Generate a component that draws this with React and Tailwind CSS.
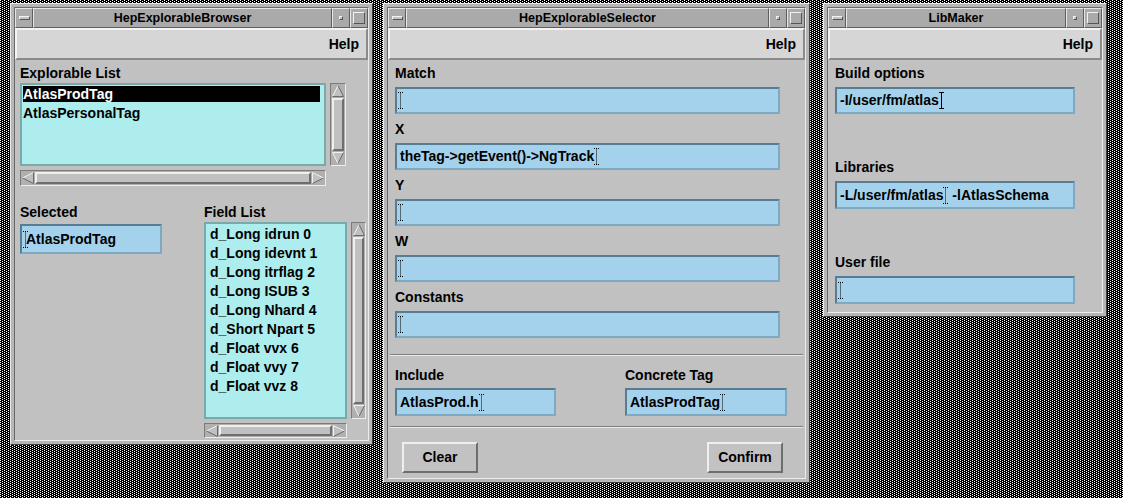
import React from "react";

const raised =
    "border-2 border-t-[#efefef] border-l-[#efefef] border-b-[#6e6e6e] border-r-[#6e6e6e]";

function Caret({ dotted }) {
    return (
        <svg width="5" height="17" viewBox="0 0 5 17" className="shrink-0">
            <path
                d="M0 0.5H5M2.5 0.5V16.5M0 16.5H5"
                stroke="#000"
                strokeWidth="1"
                strokeDasharray={dotted ? "1 1" : undefined}
                fill="none"
            />
        </svg>
    );
}

function Arrow({ dir }) {
    const shapes = {
        up: { poly: "6,0.5 0.5,11.5 11.5,11.5", light: "M0.5 11.5L6 0.5", dark: "M6 0.5L11.5 11.5L0.5 11.5" },
        down: { poly: "0.5,0.5 11.5,0.5 6,11.5", light: "M6 11.5L0.5 0.5L11.5 0.5", dark: "M11.5 0.5L6 11.5" },
        left: { poly: "0.5,6 11.5,0.5 11.5,11.5", light: "M0.5 6L11.5 0.5", dark: "M11.5 0.5L11.5 11.5L0.5 6" },
        right: { poly: "0.5,0.5 11.5,6 0.5,11.5", light: "M0.5 11.5L0.5 0.5L11.5 6", dark: "M11.5 6L0.5 11.5" },
    };
    const s = shapes[dir];
    return (
        <svg width="12" height="12" viewBox="0 0 12 12" className="shrink-0">
            <polygon points={s.poly} fill="#c0c0c0" />
            <path d={s.light} stroke="#f0f0f0" fill="none" />
            <path d={s.dark} stroke="#6a6a6a" fill="none" />
        </svg>
    );
}

function ScrollV({ className }) {
    return (
        <div
            className={`flex flex-col items-center shrink-0 bg-[#b0b0b0] border border-t-[#7b7b7b] border-l-[#7b7b7b] border-b-[#ececec] border-r-[#ececec] p-[1px] ${className}`}>
            <Arrow dir="up" />
            <div className={`flex-1 w-full my-[1px] bg-[#c0c0c0] ${raised}`} />
            <Arrow dir="down" />
        </div>
    );
}

function ScrollH({ className }) {
    return (
        <div
            className={`flex items-center bg-[#b0b0b0] border border-t-[#7b7b7b] border-l-[#7b7b7b] border-b-[#ececec] border-r-[#ececec] p-[1px] ${className}`}>
            <Arrow dir="left" />
            <div className={`flex-1 h-full mx-[1px] bg-[#c0c0c0] ${raised}`} />
            <Arrow dir="right" />
        </div>
    );
}

function Field({ className, children }) {
    return (
        <div
            className={`flex items-center bg-[#a4d2ec] border-2 border-t-[#587d92] border-l-[#587d92] border-b-[#7ea9c2] border-r-[#7ea9c2] pl-[1px] text-[14px] font-bold whitespace-pre ${className}`}>
            {children}
        </div>
    );
}

function Label({ children, className = "" }) {
    return <div className={`h-[16px] leading-[16px] text-[14px] font-bold ${className}`}>{children}</div>;
}

function Separator({ className = "" }) {
    return <div className={`h-[2px] border-t border-t-[#7d7d7d] border-b border-b-[#ececec] ${className}`} />;
}

function Window({ className, title, children }) {
    return (
        <div
            className={`absolute flex flex-col bg-[#b6b6b6] border border-t-[#e8e8e8] border-l-[#e8e8e8] border-b-[#404040] border-r-[#404040] p-[3px] ${className}`}>
            <div className="flex flex-col flex-1 border border-t-[#6a6a6a] border-l-[#6a6a6a] border-b-[#ececec] border-r-[#ececec]">
                {/* Title bar */}
                <div className="flex h-[20px]">
                    <div className="w-[18px] flex items-center justify-center bg-[#aaaaaa] border border-t-[#e6e6e6] border-l-[#e6e6e6] border-b-[#5e5e5e] border-r-[#5e5e5e]">
                        <div className="w-[11px] h-[4px] bg-[#c4c4c4] border border-t-[#f2f2f2] border-l-[#f2f2f2] border-b-[#555] border-r-[#555]" />
                    </div>
                    <div className="flex-1 flex items-center justify-center bg-[#aaaaaa] border border-t-[#e6e6e6] border-l-[#e6e6e6] border-b-[#5e5e5e] border-r-[#5e5e5e] text-[12.5px] font-bold">
                        {title}
                    </div>
                    <div className="w-[18px] flex items-center justify-center bg-[#aaaaaa] border border-t-[#e6e6e6] border-l-[#e6e6e6] border-b-[#5e5e5e] border-r-[#5e5e5e]">
                        <div className="w-[4px] h-[4px] bg-[#c4c4c4] border border-t-[#f2f2f2] border-l-[#f2f2f2] border-b-[#555] border-r-[#555]" />
                    </div>
                    <div className="w-[18px] flex items-center justify-center bg-[#aaaaaa] border border-t-[#e6e6e6] border-l-[#e6e6e6] border-b-[#5e5e5e] border-r-[#5e5e5e]">
                        <div className="w-[12px] h-[12px] bg-[#aaaaaa] border border-t-[#f2f2f2] border-l-[#f2f2f2] border-b-[#555] border-r-[#555]" />
                    </div>
                </div>
                {/* Menu bar */}
                <div className="h-[32px] flex items-center justify-end pr-[7px] bg-[#d6d6d6] border-2 border-t-[#f4f4f4] border-l-[#f4f4f4] border-b-[#8a8a8a] border-r-[#8a8a8a] text-[14px] font-bold">
                    Help
                </div>
                <div className="flex-1 bg-[#c1c1c1]">{children}</div>
            </div>
        </div>
    );
}

const fieldItems = [
    "d_Long idrun 0",
    "d_Long idevnt 1",
    "d_Long itrflag 2",
    "d_Long ISUB 3",
    "d_Long Nhard 4",
    "d_Short Npart 5",
    "d_Float vvx 6",
    "d_Float vvy 7",
    "d_Float vvz 8",
];

function Browser() {
    return (
        <Window className="left-[10px] top-[3px] w-[363px] h-[442px]" title="HepExplorableBrowser">
            <div className="pl-[5px]">
                <Label className="mt-[5px]">Explorable List</Label>
                <div className="flex gap-[4px] mt-[2px]">
                    <div className="w-[306px] h-[83px] bg-[#aeeded] border-2 border-[#79a9a9] pt-[1px] pl-[1px] pr-[4px] text-[14px] font-bold">
                        <div className="h-[16px] leading-[16px] bg-black text-white">AtlasProdTag</div>
                        <div className="mt-[3px] leading-[16px]">AtlasPersonalTag</div>
                    </div>
                    <ScrollV className="w-[16px] h-[83px]" />
                </div>
                <ScrollH className="w-[306px] h-[16px] mt-[4px]" />
                <div className="flex mt-[18px]">
                    <div className="w-[184px] shrink-0">
                        <Label>Selected</Label>
                        <Field className="mt-[4px] w-[142px] h-[30px]">
                            <Caret dotted />
                            <span className="-ml-[2px]">AtlasProdTag</span>
                        </Field>
                    </div>
                    <div className="shrink-0">
                        <Label>Field List</Label>
                        <div className="flex gap-[4px] mt-[2px]">
                            <div className="w-[143px] h-[197px] bg-[#aeeded] border-2 border-[#79a9a9] pt-[1px] pl-[4px] text-[14px] font-bold">
                                {fieldItems.map((item) => (
                                    <div key={item} className="h-[19px] leading-[19px] whitespace-nowrap">
                                        {item}
                                    </div>
                                ))}
                            </div>
                            <ScrollV className="w-[15px] h-[197px]" />
                        </div>
                        <ScrollH className="w-[143px] h-[15px] mt-[4px]" />
                    </div>
                </div>
            </div>
        </Window>
    );
}

function Selector() {
    const rows = [
        { label: "Match", value: null },
        { label: "X", value: "theTag->getEvent()->NgTrack" },
        { label: "Y", value: null },
        { label: "W", value: null },
        { label: "Constants", value: null },
    ];
    return (
        <Window className="left-[383px] top-[3px] w-[427px] h-[480px]" title="HepExplorableSelector">
            <div className="flex flex-col gap-[7px] pl-[7px] pt-[5px]">
                {rows.map((row) => (
                    <div key={row.label}>
                        <Label>{row.label}</Label>
                        <Field className="mt-[6px] w-[385px] h-[27px]">
                            {row.value ? (
                                <>
                                    <span className="pl-[2px]">{row.value}</span>
                                    <Caret dotted />
                                </>
                            ) : (
                                <Caret dotted />
                            )}
                        </Field>
                    </div>
                ))}
            </div>
            <Separator className="mx-[2px] mt-[16px]" />
            <div className="flex pl-[7px] mt-[11px]">
                <div className="w-[230px] shrink-0">
                    <Label>Include</Label>
                    <Field className="mt-[5px] w-[161px] h-[28px]">
                        <span className="pl-[2px]">AtlasProd.h</span>
                        <Caret dotted />
                    </Field>
                </div>
                <div>
                    <Label>Concrete Tag</Label>
                    <Field className="mt-[5px] w-[162px] h-[28px]">
                        <span className="pl-[2px]">AtlasProdTag</span>
                        <Caret dotted />
                    </Field>
                </div>
            </div>
            <Separator className="mx-[2px] mt-[10px]" />
            <div className="flex justify-between pl-[14px] pr-[22px] mt-[14px]">
                <button className={`w-[76px] h-[31px] bg-[#c2c2c2] ${raised} text-[14px] font-bold`}>Clear</button>
                <button className={`w-[76px] h-[31px] bg-[#c2c2c2] ${raised} text-[14px] font-bold`}>Confirm</button>
            </div>
        </Window>
    );
}

function LibMaker() {
    return (
        <Window className="left-[823px] top-[3px] w-[284px] h-[314px]" title="LibMaker">
            <div className="flex flex-col gap-[45px] pl-[7px] pt-[5px]">
                <div>
                    <Label>Build options</Label>
                    <Field className="mt-[6px] w-[240px] h-[27px]">
                        <span className="pl-[2px]">-I/user/fm/atlas</span>
                        <Caret />
                    </Field>
                </div>
                <div>
                    <Label>Libraries</Label>
                    <Field className="mt-[6px] w-[240px] h-[28px]">
                        <span className="pl-[2px]">-L/user/fm/atlas</span>
                        <Caret dotted />
                        <span> -lAtlasSchema</span>
                    </Field>
                </div>
                <div>
                    <Label>User file</Label>
                    <Field className="mt-[6px] w-[240px] h-[28px]">
                        <Caret dotted />
                    </Field>
                </div>
            </div>
        </Window>
    );
}

// root-window weave behind the windows: sparse staggered white dots on black
function Desktop() {
    return (
        <svg className="absolute inset-0" width="1123" height="498" shapeRendering="crispEdges">
            <defs>
                <pattern id="weave" width="4" height="2" patternUnits="userSpaceOnUse">
                    <rect width="4" height="2" fill="#000" />
                    <rect x="0" y="0" width="1" height="1" fill="#fff" />
                    <rect x="2" y="1" width="1" height="1" fill="#fff" />
                </pattern>
            </defs>
            <rect width="1123" height="498" fill="url(#weave)" />
        </svg>
    );
}

export default function App() {
    return (
        <div className="relative w-[1123px] h-[498px] overflow-hidden bg-black font-['Liberation_Sans',Arial,sans-serif] text-black">
            <Desktop />
            <Browser />
            <Selector />
            <LibMaker />
        </div>
    );
}
